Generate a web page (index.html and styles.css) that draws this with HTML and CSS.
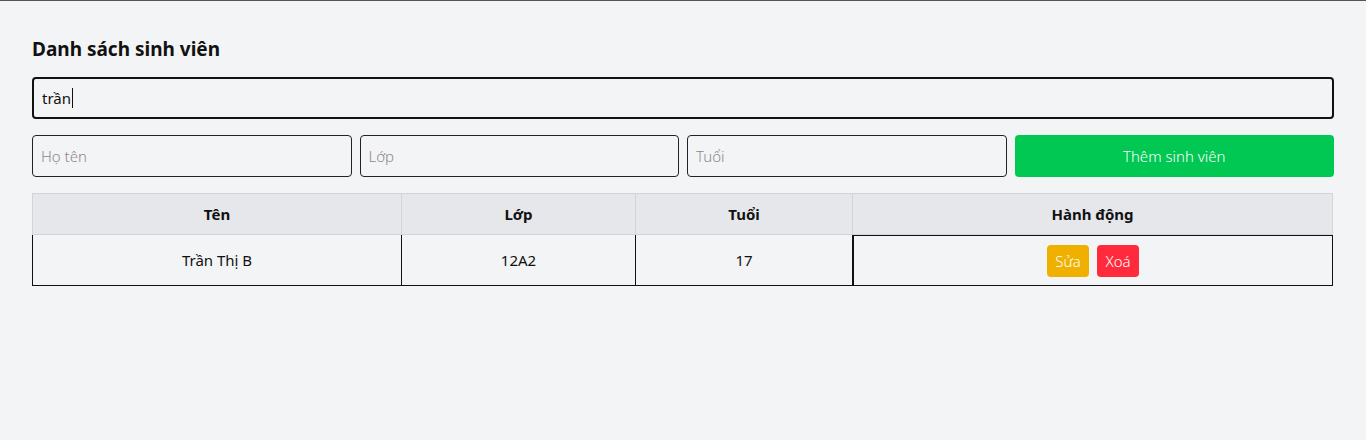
FILE: index.html
```html
<!DOCTYPE html>
<html lang="vi">
<head>
<meta charset="utf-8">
<title>Danh sách sinh viên</title>
<link rel="stylesheet" href="styles.css">
</head>
<body>
<div class="page">
  <h2 class="title">Danh sách sinh viên</h2>
  <div class="search">trần<span class="caret"></span></div>
  <div class="form-row">
    <div class="field placeholder">Họ tên</div>
    <div class="field placeholder">Lớp</div>
    <div class="field placeholder">Tuổi</div>
    <button class="add-btn">Thêm sinh viên</button>
  </div>
  <table class="students">
    <colgroup>
      <col class="c-name">
      <col class="c-class">
      <col class="c-age">
      <col class="c-act">
    </colgroup>
    <thead>
      <tr>
        <th>Tên</th>
        <th>Lớp</th>
        <th>Tuổi</th>
        <th>Hành động</th>
      </tr>
    </thead>
    <tbody>
      <tr>
        <td>Trần Thị B</td>
        <td>12A2</td>
        <td>17</td>
        <td class="actions">
          <span class="btn edit">Sửa</span><span class="btn del">Xoá</span>
        </td>
      </tr>
    </tbody>
  </table>
</div>
</body>
</html>
```

FILE: styles.css
```css
* { box-sizing: border-box; }

body {
  margin: 0;
  background: #f3f4f6;
  border-top: 1px solid #555;
  font-family: "Noto Sans", "Open Sans", sans-serif;
  color: #111;
  height: 440px;
}

.page {
  padding: 36px 32px 0 32px;
}

.title {
  margin: 0 0 16px 0;
  font-size: 19px;
  line-height: 24px;
  font-weight: 700;
  color: #111;
}

.search {
  height: 42px;
  border: 2px solid #111;
  border-radius: 4px;
  padding: 0 8px;
  display: flex;
  align-items: center;
  font-size: 15px;
  color: #111;
  margin-bottom: 16px;
}

.caret {
  display: inline-block;
  width: 1px;
  height: 20px;
  background: #111;
  margin-left: 1px;
}

.form-row {
  display: grid;
  grid-template-columns: repeat(4, 1fr);
  gap: 8px;
  margin-bottom: 16px;
}

.field {
  height: 42px;
  border: 1px solid #222;
  border-radius: 4px;
  padding: 0 8px;
  display: flex;
  align-items: center;
  font-size: 15px;
}

.placeholder {
  color: #8a8a8a;
  font-weight: 300;
}

.add-btn {
  height: 42px;
  border: none;
  border-radius: 4px;
  background: #00c853;
  color: #fff;
  font-family: inherit;
  font-size: 15px;
  font-weight: 300;
}

.students {
  width: 1301px;
  table-layout: fixed;
  border-collapse: separate;
  border-spacing: 0;
  font-size: 15px;
}

.c-name { width: 370px; }
.c-class { width: 234px; }
.c-age { width: 217px; }
.c-act { width: 480px; }

.students th {
  height: 42px;
  background: #e5e7eb;
  font-weight: 700;
  text-align: center;
  border-top: 1px solid #d1d5db;
  border-right: 1px solid #d1d5db;
  border-bottom: 1px solid #d1d5db;
  padding: 0;
}

.students th:first-child {
  border-left: 1px solid #d1d5db;
}

.students td {
  height: 51px;
  text-align: center;
  border-right: 1px solid #111;
  border-bottom: 1px solid #111;
  padding: 0;
  font-weight: 400;
}

.students td:first-child {
  border-left: 1px solid #111;
}

.students td.actions {
  border-top: 1px solid #111;
  border-left: 1px solid #111;
}

.btn {
  display: inline-flex;
  align-items: center;
  justify-content: center;
  width: 42px;
  height: 32px;
  border-radius: 4px;
  color: #fff;
  font-size: 15px;
  font-weight: 300;
  vertical-align: middle;
}

.btn + .btn { margin-left: 8px; }

.edit { background: #efb000; }
.del { background: #ff2b3c; }
```
